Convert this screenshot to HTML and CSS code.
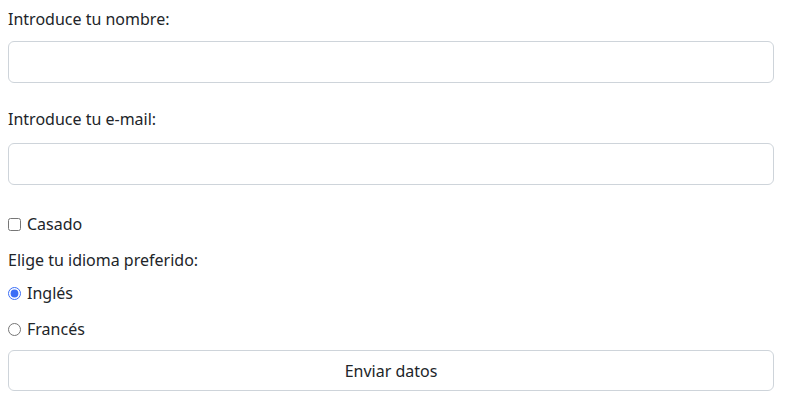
FILE: index.html
```html
<!DOCTYPE html>
<html lang="es">
<head>
<meta charset="utf-8">
<title>Formulario</title>
<link rel="stylesheet" href="styles.css">
</head>
<body>
<form class="form">
  <label class="label label-first" for="nombre">Introduce tu nombre:</label>
  <input class="field" type="text" id="nombre">
  <label class="label label-second" for="email">Introduce tu e-mail:</label>
  <input class="field" type="email" id="email">
  <label class="check row-casado"><input type="checkbox" class="box"> Casado</label>
  <div class="text row-elige">Elige tu idioma preferido:</div>
  <label class="check row-ingles"><input type="radio" name="idioma" class="radio" checked> Inglés</label>
  <label class="check row-frances"><input type="radio" name="idioma" class="radio"> Francés</label>
  <button type="button" class="btn">Enviar datos</button>
</form>
</body>
</html>
```
FILE: styles.css
```css
html, body {
  margin: 0;
  padding: 0;
  background: #ffffff;
}
body {
  font-family: "Noto Sans", "Open Sans", sans-serif;
  font-size: 16px;
  line-height: 24px;
  color: #212529;
}
.form {
  display: flex;
  flex-direction: column;
  width: 766px;
  margin-left: 8px;
  padding-top: 7px;
}
.label {
  display: block;
  height: 24px;
}
.label-first { margin-bottom: 10px; }
.label-second { margin-top: 24px; margin-bottom: 12px; }
.field {
  box-sizing: border-box;
  height: 42px;
  width: 100%;
  margin: 0;
  border: 1px solid #ced4da;
  border-radius: 6px;
  background: #fff;
  font: inherit;
  padding: 6px 12px;
}
.check {
  display: flex;
  align-items: center;
  height: 24px;
}
.box {
  width: 13px;
  height: 13px;
  margin: 0 6px 0 0;
}
.radio {
  width: 13px;
  height: 13px;
  margin: 0 6px 0 0;
  accent-color: #3b6ef6;
}
.text { height: 24px; }
.row-casado { margin-top: 27px; }
.row-elige { margin-top: 12px; }
.row-ingles { margin-top: 9px; }
.row-frances { margin-top: 12px; }
.btn {
  box-sizing: border-box;
  margin-top: 9px;
  height: 41px;
  width: 100%;
  border: 1px solid #ced4da;
  border-radius: 6px;
  background: #fff;
  color: #212529;
  font: inherit;
  cursor: pointer;
}
```
